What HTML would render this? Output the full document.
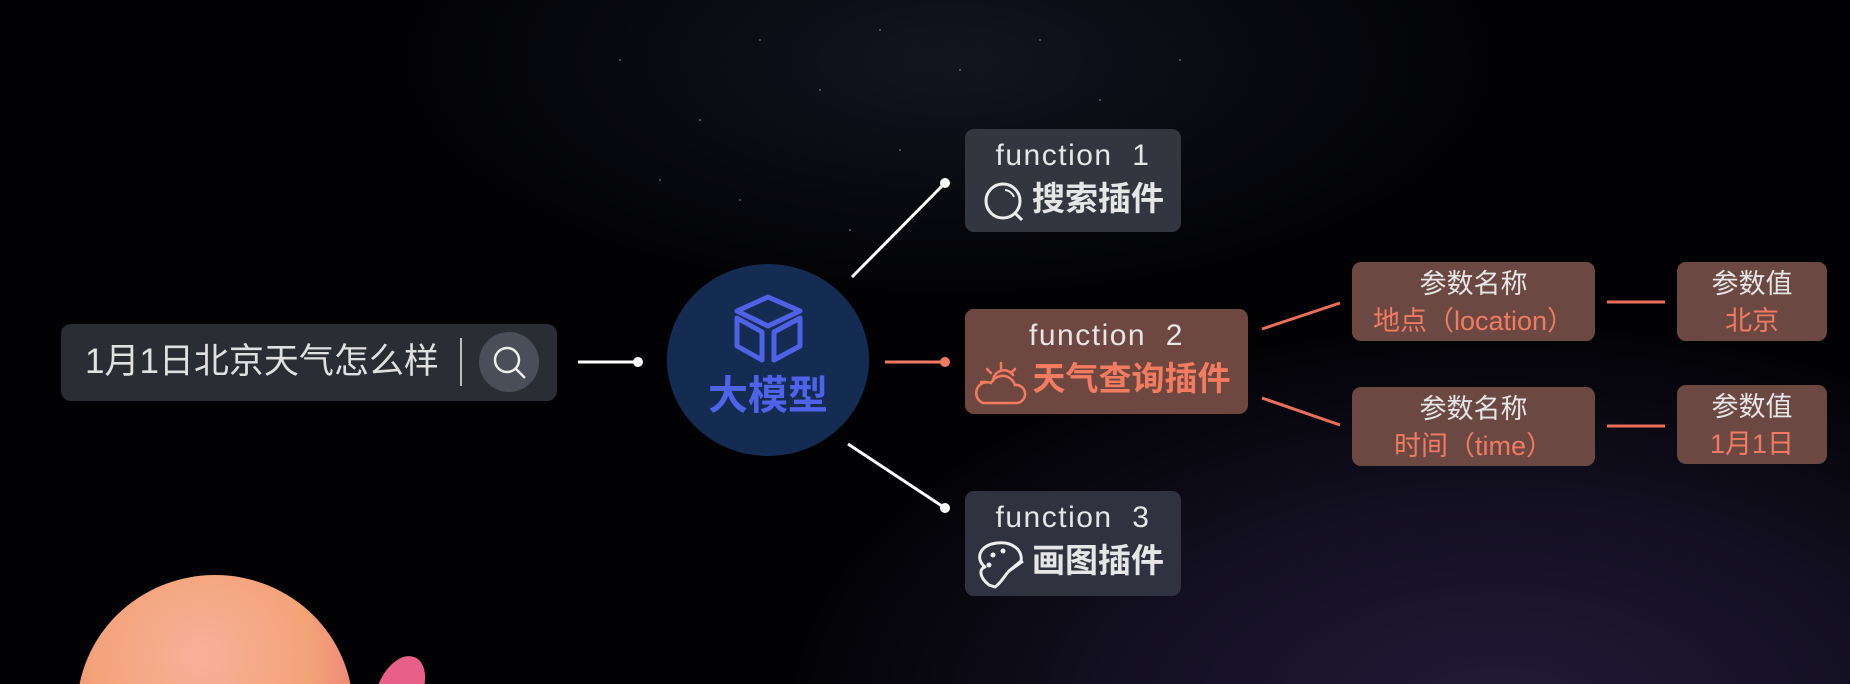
<!DOCTYPE html>
<html><head><meta charset="utf-8"><style>
*{margin:0;padding:0;box-sizing:border-box}
html,body{width:1850px;height:684px;overflow:hidden}
body{position:relative;font-family:"Liberation Sans","Noto Sans CJK SC",sans-serif;
background:radial-gradient(ellipse 900px 500px at 1500px 720px,#241a3a 0%,#120f20 45%,rgba(0,0,0,0) 80%),
radial-gradient(ellipse 700px 300px at 950px 60px,#121420 0%,rgba(0,0,0,0) 80%),#020204;}
.box{position:absolute;border-radius:9px;text-align:center;color:#e6e6e6}
.fn{background:#33363f}
.or{background:#6b4942}
.t1{font-size:30px;line-height:34px;letter-spacing:1.5px}
.t2{font-size:33px;font-weight:bold;line-height:52px}
.p1{font-size:27px;line-height:34px}
.p2{font-size:27px;line-height:40px;color:#f07a62}
svg{position:absolute;left:0;top:0}
</style></head><body>
<svg width="1850" height="684">
<defs><radialGradient id="bl" cx="0.45" cy="0.3" r="0.8"><stop offset="0" stop-color="#f7b09a"/><stop offset="0.5" stop-color="#f4a378"/><stop offset="1" stop-color="#e0607a"/></radialGradient></defs>
<g fill="#fff" opacity="0.35">
<circle cx="620" cy="60" r="1"/><circle cx="700" cy="120" r="1"/><circle cx="760" cy="40" r="1"/><circle cx="820" cy="90" r="1"/><circle cx="880" cy="30" r="1"/><circle cx="900" cy="150" r="1"/><circle cx="960" cy="70" r="1"/><circle cx="1040" cy="40" r="1"/><circle cx="1100" cy="100" r="1"/><circle cx="850" cy="230" r="1"/><circle cx="660" cy="180" r="1"/><circle cx="1180" cy="60" r="1"/><circle cx="740" cy="200" r="1"/>
</g>
<ellipse cx="215" cy="710" rx="138" ry="135" fill="url(#bl)"/>
<ellipse cx="400" cy="690" rx="22" ry="36" fill="#e8608a" transform="rotate(25 400 690)"/>
<line x1="578" y1="362" x2="638" y2="362" stroke="#fff" stroke-width="3"/><circle cx="638" cy="362" r="5" fill="#fff"/>
<ellipse cx="768" cy="360" rx="101" ry="96" fill="#142b52"/>
<g fill="none" stroke="#4f62e6" stroke-width="5" stroke-linejoin="round">
<path d="M737 311 L768 297 L800 311 L768 326 Z"/>
<path d="M737 318 L737 346 L762 360 L762 332 Z"/>
<path d="M800 318 L800 346 L774 360 L774 332 Z"/>
</g>
<text x="768" y="409" text-anchor="middle" font-size="40" font-weight="bold" fill="#4f63ea" font-family="Liberation Sans,Noto Sans CJK SC,sans-serif">大模型</text>
<line x1="852" y1="277" x2="945" y2="183" stroke="#fff" stroke-width="3"/><circle cx="945" cy="183" r="5" fill="#fff"/>
<line x1="885" y1="362" x2="945" y2="362" stroke="#f07a62" stroke-width="3"/><circle cx="945" cy="362" r="5" fill="#f07a62"/>
<line x1="848" y1="444" x2="945" y2="508" stroke="#fff" stroke-width="3"/><circle cx="945" cy="508" r="5" fill="#fff"/>
<line x1="1262" y1="329" x2="1340" y2="303" stroke="#e8705a" stroke-width="3"/>
<line x1="1262" y1="398" x2="1340" y2="425" stroke="#e8705a" stroke-width="3"/>
<line x1="1607" y1="302" x2="1665" y2="302" stroke="#e8705a" stroke-width="3"/>
<line x1="1607" y1="426" x2="1665" y2="426" stroke="#e8705a" stroke-width="3"/>
</svg>
<div class="box" style="left:61px;top:324px;width:496px;height:77px;background:#2a2d34;border-radius:10px">
<div style="position:absolute;left:24px;top:16px;font-size:35px;line-height:44px;color:#e0e0e0;white-space:nowrap">1月1日北京天气怎么样</div>
<div style="position:absolute;left:399px;top:14px;width:2px;height:48px;background:#bbb"></div>
<div style="position:absolute;left:418px;top:8px;width:60px;height:60px;border-radius:50%;background:#4a4e58"></div>
<svg width="496" height="77"><circle cx="446" cy="36" r="12" fill="none" stroke="#eee" stroke-width="2.5"/><line x1="455" y1="45" x2="464" y2="54" stroke="#eee" stroke-width="2.5"/></svg>
</div>
<div class="box fn" style="left:965px;top:129px;width:216px;height:103px;padding-top:10px">
<div class="t1">function&nbsp; 1</div>
<div class="t2" style="padding-left:50px">搜索插件</div>
<svg width="216" height="103"><circle cx="38" cy="72" r="17" fill="none" stroke="#eee" stroke-width="3"/><line x1="50" y1="84" x2="57" y2="91" stroke="#eee" stroke-width="3"/><path d="M40 61 A11 11 0 0 1 49 68" fill="none" stroke="#eee" stroke-width="2"/></svg>
</div>
<div class="box or" style="left:965px;top:309px;width:283px;height:105px;background:#6e4740;padding-top:10px">
<div class="t1">function&nbsp; 2</div>
<div class="t2" style="padding-left:50px;color:#f27b60">天气查询插件</div>
<svg width="283" height="105"><g fill="none" stroke="#f27b60" stroke-width="2.5" stroke-linecap="round"><path d="M18 94 H52 A9 9 0 0 0 50 76 A13 13 0 0 0 26 74 A10 10 0 0 0 18 94 Z"/><path d="M28 72 A11 11 0 0 1 48 66"/><line x1="36" y1="54" x2="36" y2="60"/><line x1="22" y1="60" x2="26" y2="64"/><line x1="50" y1="60" x2="46" y2="64"/><line x1="16" y1="73" x2="21" y2="73"/></g></svg>
</div>
<div class="box fn" style="left:965px;top:491px;width:216px;height:105px;padding-top:10px;background:#30333f">
<div class="t1">function&nbsp; 3</div>
<div class="t2" style="padding-left:50px">画图插件</div>
<svg width="216" height="105"><g fill="none" stroke="#eee" stroke-width="3" stroke-linejoin="round"><path d="M24 94 C14 86 14 78 20 76 C10 68 14 54 32 52 C48 50 58 60 56 70 L44 80 C40 84 36 92 30 96 Z"/><line x1="44" y1="80" x2="58" y2="70"/></g><circle cx="28" cy="64" r="2.5" fill="#eee"/><circle cx="38" cy="60" r="2.5" fill="#eee"/><circle cx="24" cy="74" r="2.5" fill="#eee"/></svg>
</div>
<div class="box or" style="left:1352px;top:262px;width:243px;height:79px;padding-top:5px"><div class="p1">参数名称</div><div class="p2">地点（location）</div></div>
<div class="box or" style="left:1677px;top:262px;width:150px;height:79px;padding-top:5px"><div class="p1">参数值</div><div class="p2">北京</div></div>
<div class="box or" style="left:1352px;top:387px;width:243px;height:79px;padding-top:5px"><div class="p1">参数名称</div><div class="p2">时间（time）</div></div>
<div class="box or" style="left:1677px;top:385px;width:150px;height:79px;padding-top:5px"><div class="p1">参数值</div><div class="p2">1月1日</div></div>
</body></html>
